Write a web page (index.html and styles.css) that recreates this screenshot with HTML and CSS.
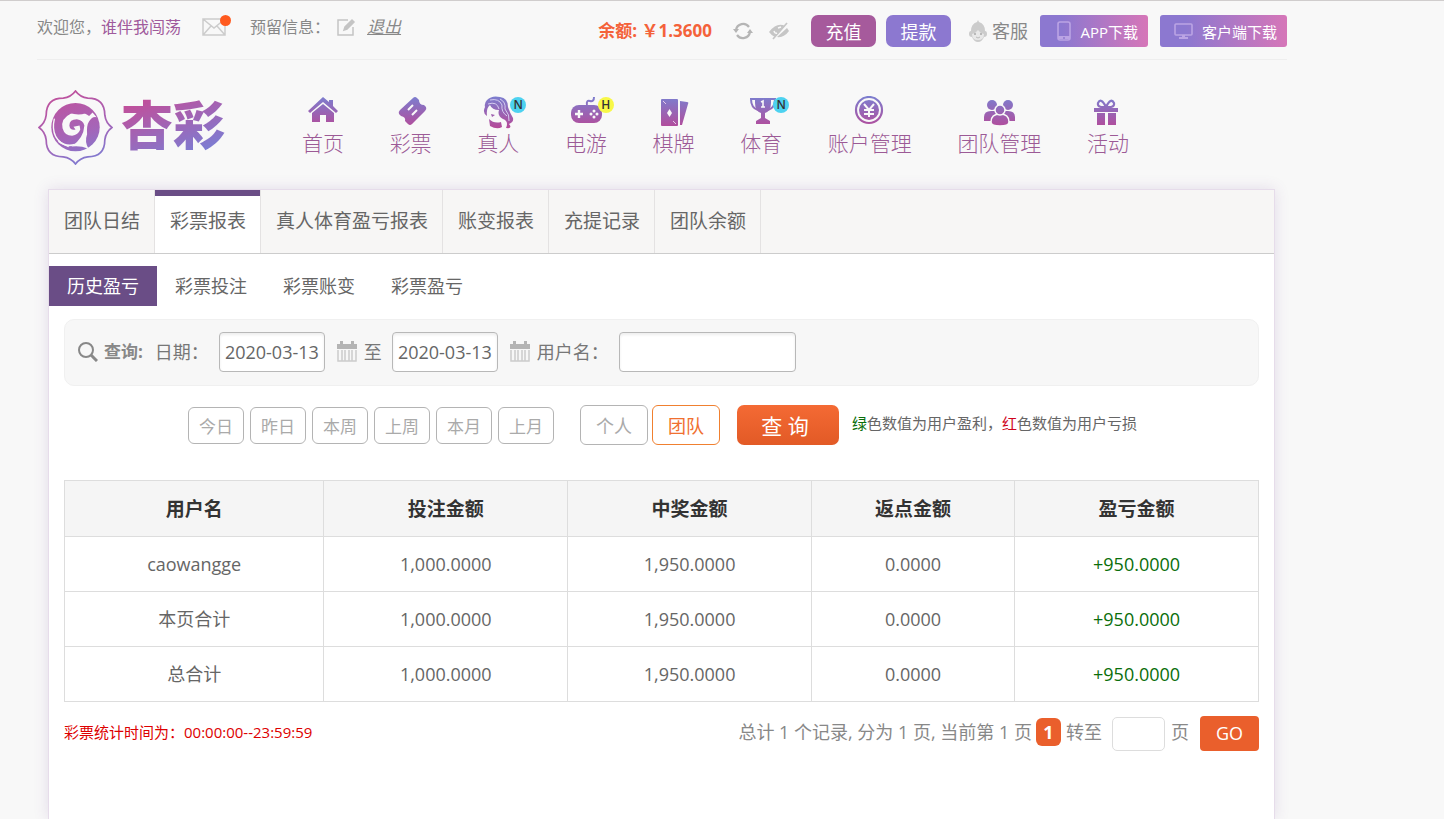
FILE: index.html
```
<!DOCTYPE html>
<html lang="zh-CN">
<head>
    <meta charset="UTF-8">
    <meta name="viewport" content="width=device-width, initial-scale=1.0">
    <title>杏彩 - 彩票报表</title>
    <link rel="stylesheet" href="styles.css">
</head>
<body>
    <svg class="defs" width="0" height="0" aria-hidden="true">
        <defs>
            <linearGradient id="nav-fill" gradientUnits="userSpaceOnUse" x1="0" y1="0" x2="0" y2="32">
                <stop offset="0" stop-color="#7b7fd0"/>
                <stop offset="1" stop-color="#b54a99"/>
            </linearGradient>
            <linearGradient id="logo-fill" gradientUnits="userSpaceOnUse" x1="60" y1="0" x2="140" y2="220">
                <stop offset="0" stop-color="#c14f9a"/>
                <stop offset="0.6" stop-color="#a565b8"/>
                <stop offset="1" stop-color="#7d7cd2"/>
            </linearGradient>
        </defs>
    </svg>

    <header class="header">
        <div class="topbar">
            <div class="welcome">
                <span>欢迎您，<a href="#" class="user">谁伴我闯荡</a></span>
                <a href="#" class="mail" aria-label="消息">
                    <svg width="24" height="20" viewBox="0 0 24 20" fill="none" stroke="#ccc" stroke-width="1.5">
                        <path d="M1 2h22v16H1zM1 2l11 9 11-9M1 18l8-9M23 18l-8-9"/>
                    </svg>
                    <i class="dot"></i>
                </a>
                <span>预留信息：</span>
                <a href="#" class="edit" aria-label="编辑">
                    <svg width="19" height="19" viewBox="0 0 19 19" fill="none" stroke="#c4c4c4" stroke-width="1.5">
                        <path d="M11 2H1v15h15V9"/>
                        <path d="M7 12l1-3 7-7 2 2-7 7z" fill="#c4c4c4"/>
                    </svg>
                </a>
                <a href="#" class="logout">退出</a>
            </div>
            <div class="account">
                <span class="balance">余额: ￥1.3600</span>
                <button type="button" class="icon-btn" aria-label="刷新">
                    <svg width="20" height="20" viewBox="0 0 20 20" fill="none" stroke="#b5b5b5" stroke-width="2.2">
                        <path d="M3 9a7.200 7.200 0 0 1 13-3M17 11a7.200 7.200 0 0 1-13 3"/>
                        <path d="M0 8h6l-3 4zM14 12h6l-3-4z" fill="#b5b5b5" stroke="none"/>
                    </svg>
                </button>
                <button type="button" class="icon-btn eye" aria-label="隐藏余额">
                    <svg width="20" height="20" viewBox="0 0 20 20">
                        <path d="M0 11Q8 1 16 5L6 16Q2 14 0 11zM18 7l2 3Q15 17 8 16z" fill="#c6c6c6"/>
                        <path d="M18 2L4 18" stroke="#c6c6c6" stroke-width="1.6"/>
                        <path d="M5 10q1 3 3 2M9 7l3-1" stroke="#f8f8f8" stroke-width="1.500" fill="none"/>
                    </svg>
                </button>
                <button type="button" class="btn recharge">充值</button>
                <button type="button" class="btn withdraw">提款</button>
                <a href="#" class="service">
                    <svg width="20" height="23" viewBox="0 0 20 23">
                        <path d="M10 0l1 2q6 2 6 9 2 0 2 3t-3 3q-2 5-6 5t-6-5q-3 0-3-3t2-3q0-7 6-9z" fill="#ccc"/>
                        <path d="M4 14q4-1 6-4 2 3 6 4 0 6-6 6t-6-6z" fill="#e8e8e8"/>
                        <circle cx="7" cy="14" r="1" fill="#aaa"/><circle cx="13" cy="14" r="1" fill="#aaa"/>
                        <path d="M8 17q2 2 4 0" fill="none" stroke="#bbb"/>
                    </svg>
                    客服
                </a>
                <button type="button" class="download app">
                    <svg width="14" height="20" viewBox="0 0 14 20">
                        <rect x="1" y="1" width="12" height="18" rx="2" fill="none" stroke="#bba4e4" stroke-width="1.6"/>
                        <path d="M1 15h12v3H1z" fill="#bba4e4"/><circle cx="7" cy="17" r="1" fill="#8f78cf"/>
                    </svg>
                    APP下载
                </button>
                <button type="button" class="download client">
                    <svg width="19" height="16" viewBox="0 0 19 16">
                        <rect x="1" y="1" width="17" height="11" rx="1" fill="none" stroke="#bba4e4" stroke-width="1.600"/>
                        <path d="M8 12h3v2h3v2H5v-2h3z" fill="#bba4e4"/>
                    </svg>
                    客户端下载
                </button>
            </div>
        </div>

        <div class="main-nav">
            <a href="#" class="logo">
                <svg width="75" height="75" viewBox="0 0 220 220">
                    <path d="M110 3C118 14 130 22 146 24C180 24 196 40 196 74C198 90 206 102 217 110C206 118 198 130 196 146C196 180 180 196 146 196C130 198 118 206 110 217C102 206 90 198 74 196C40 196 24 180 24 146C22 130 14 118 3 110C14 102 22 90 24 74C24 40 40 24 74 24C90 22 102 14 110 3Z" fill="none" stroke="url(#logo-fill)" stroke-width="5"/>
                    <circle cx="110" cy="109" r="71" fill="url(#logo-fill)"/>
                    <path d="M150 76Q128 60 96 70Q66 84 72 112Q78 134 100 134Q118 132 124 116L122 104L104 108L110 116Q94 120 92 104Q92 86 114 86Q132 88 136 104Q134 142 98 166Q122 162 148 172Q136 152 144 130Q142 104 150 92Q160 76 172 80L160 66z" fill="#f8f8f8"/>
                    <path d="M92 66Q106 56 124 60L140 68Q116 76 92 66z" fill="url(#logo-fill)"/>
                    <path d="M48 84Q34 146 90 166M170 58q14 16 14 34" fill="none" stroke="#f8f8f8" stroke-width="4"/>
                    <path d="M60 150Q82 168 108 160" fill="none" stroke="#f8f8f8" stroke-width="5"/>
                </svg>
                <span class="logo-text">杏彩</span>
            </a>
            <nav class="menu">
                <a href="#">
                    <svg width="36" height="33" viewBox="0 0 36 33" fill="url(#nav-fill)">
                        <path d="M18 1l6 5V4h4v6l5 5-2 2L18 6 5 17l-2-2z"/>
                        <path d="M18 8l11 9v9h-8v-7h-6v7H7v-9z"/>
                    </svg>
                    首页
                </a>
                <a href="#">
                    <svg width="36" height="33" viewBox="0 0 36 33" fill="url(#nav-fill)">
                        <path d="M20 2q2-2 4 0l2 2q0 5 5 5l2 2q1 2-1 4L19 28q-2 2-4 0l-3-3q1-4-4-5l-2-2q-1-2 1-4z"/>
                        <path d="M15 14l5-5M19 19l5-5" stroke="#f8f8f8" stroke-width="2"/>
                    </svg>
                    彩票
                </a>
                <a href="#">
                    <svg width="36" height="33" viewBox="0 0 36 33" fill="url(#nav-fill)">
                        <path d="M7 4Q12-1 20 1Q28 2 28 11Q30 17 33 22Q34 26 29 28Q33 33 26 32Q29 25 23 23Q17 20 19 14Q12 14 10 9Q6 12 7 20Q2 17 5 11Q4 7 7 4z"/>
                        <path d="M9 23q5 5 12 3l1 5q-5 3-12-1zM11 18l4 1-3 2z"/>
                        <path d="M10 4q9-2 12 5-1 7 5 11M8 8q9-3 11 5M20 3q6 3 5 10 5 6 4 12" fill="none" stroke="#d5cdf0" stroke-width="1"/>
                    </svg>
                    真人
                    <i class="tag new">N</i>
                </a>
                <a href="#">
                    <svg width="36" height="33" viewBox="0 0 36 33" fill="url(#nav-fill)">
                        <rect x="3" y="9" width="31" height="18" rx="8"/>
                        <path d="M19 9q-1-5 3-4 4 1 4-4" fill="none" stroke="url(#nav-fill)" stroke-width="2"/>
                        <path d="M11 14v8M7 18h8" stroke="#f8f8f8" stroke-width="2.400"/>
                        <g fill="#f8f8f8"><circle cx="26" cy="15" r="1.500"/><circle cx="26" cy="21" r="1.500"/><circle cx="23" cy="18" r="1.500"/><circle cx="29" cy="18" r="1.500"/></g>
                    </svg>
                    电游
                    <i class="tag hot">H</i>
                </a>
                <a href="#">
                    <svg width="36" height="33" viewBox="0 0 36 33" fill="url(#nav-fill)">
                        <rect x="5" y="3" width="17" height="27" rx="1"/>
                        <path d="M24 5l7 1q2 0 1 2l-6 21h-2z"/>
                        <path d="M13.500 13l2.500 4-2.500 4-2.500-4z" fill="#f8f8f8"/>
                        <path d="M7 5l3 3M17 25l3 3" stroke="#e6c8e8" stroke-width="1"/>
                    </svg>
                    棋牌
                </a>
                <a href="#">
                    <svg width="36" height="33" viewBox="0 0 36 33" fill="url(#nav-fill)">
                        <path d="M12 2h16v5q0 8-6 10v5l5 3v3H13v-3l5-3v-5q-6-2-6-10z"/>
                        <path d="M12 3H8q0 9 7 11M28 3h4q0 9-7 11" fill="none" stroke="url(#nav-fill)" stroke-width="2"/>
                        <path d="M18 6l2-1v6M18 11h4" fill="none" stroke="#f8f8f8" stroke-width="1.600"/>
                    </svg>
                    体育
                    <i class="tag new">N</i>
                </a>
                <a href="#">
                    <svg width="36" height="33" viewBox="0 0 36 33" fill="url(#nav-fill)">
                        <circle cx="17" cy="14" r="13" fill="none" stroke="url(#nav-fill)" stroke-width="2.200"/>
                        <circle cx="17" cy="14" r="10"/>
                        <path d="M12 8l5 6 5-6M17 14v7M12 14h10M12 18h10" fill="none" stroke="#f8f8f8" stroke-width="2"/>
                    </svg>
                    账户管理
                </a>
                <a href="#">
                    <svg width="36" height="33" viewBox="0 0 36 33" fill="url(#nav-fill)">
                        <circle cx="11" cy="9" r="5"/><circle cx="27" cy="9" r="5"/>
                        <path d="M3 25v-4q0-6 7-6h17q7 0 7 6v4z"/>
                        <g stroke="#f8f8f8" stroke-width="1.500"><path d="M10 26q0-8 9-8t9 8q0 4-9 4t-9-4z"/><circle cx="19" cy="14" r="5"/></g>
                    </svg>
                    团队管理
                </a>
                <a href="#">
                    <svg width="36" height="33" viewBox="0 0 36 33" fill="url(#nav-fill)">
                        <path d="M4 12h24v4H4zM7 17h8v12H7zM18 17h8v12h-8z"/>
                        <path d="M16 11Q7 12 8 7q3-6 8 4 5-10 8-4 1 5-8 4z" fill="none" stroke="url(#nav-fill)" stroke-width="2.200"/>
                    </svg>
                    活动
                </a>
            </nav>
        </div>
    </header>

    <main class="panel">
        <nav class="tabs">
            <a href="#">团队日结</a>
            <a href="#" class="active">彩票报表</a>
            <a href="#">真人体育盈亏报表</a>
            <a href="#">账变报表</a>
            <a href="#">充提记录</a>
            <a href="#">团队余额</a>
        </nav>
        <nav class="subtabs">
            <a href="#" class="active">历史盈亏</a>
            <a href="#">彩票投注</a>
            <a href="#">彩票账变</a>
            <a href="#">彩票盈亏</a>
        </nav>

        <form class="content">
            <div class="search">
                <svg class="magnifier" width="21" height="21" viewBox="0 0 21 21" fill="none" stroke="#888">
                    <circle cx="9" cy="9" r="7" stroke-width="2"/><path d="M14 14l6 6" stroke-width="3"/>
                </svg>
                <span class="search-title">查询:</span>
                <label for="date-from">日期：</label>
                <input type="text" id="date-from" class="date" value="2020-03-13">
                <svg class="calendar" width="20" height="21" viewBox="0 0 20 21">
                    <path d="M0 3h20v5H0zM3 0h3v5H3zM14 0h3v5h-3z" fill="#b4b4b4"/>
                    <path d="M1 9v11h18V9M5 9v11M8 9v11M12 9v11M15 9v11" fill="none" stroke="#ccc" stroke-width="1.500"/>
                </svg>
                <label for="date-to">至</label>
                <input type="text" id="date-to" class="date" value="2020-03-13">
                <svg class="calendar" width="20" height="21" viewBox="0 0 20 21">
                    <path d="M0 3h20v5H0zM3 0h3v5H3zM14 0h3v5h-3z" fill="#b4b4b4"/>
                    <path d="M1 9v11h18V9M5 9v11M8 9v11M12 9v11M15 9v11" fill="none" stroke="#ccc" stroke-width="1.500"/>
                </svg>
                <label for="username">用户名：</label>
                <input type="text" id="username" class="username">
            </div>

            <div class="filters">
                <div class="range">
                    <button type="button">今日</button>
                    <button type="button">昨日</button>
                    <button type="button">本周</button>
                    <button type="button">上周</button>
                    <button type="button">本月</button>
                    <button type="button">上月</button>
                </div>
                <div class="scope">
                    <button type="button">个人</button>
                    <button type="button" class="active">团队</button>
                </div>
                <button type="submit" class="submit">查 询</button>
                <p class="hint"><span class="green">绿</span>色数值为用户盈利，<span class="red">红</span>色数值为用户亏损</p>
            </div>

            <table class="report">
                <thead>
                    <tr>
                        <th class="col-user">用户名</th>
                        <th class="col-bet">投注金额</th>
                        <th class="col-win">中奖金额</th>
                        <th class="col-rebate">返点金额</th>
                        <th class="col-profit">盈亏金额</th>
                    </tr>
                </thead>
                <tbody>
                    <tr>
                        <td>caowangge</td>
                        <td>1,000.0000</td>
                        <td>1,950.0000</td>
                        <td>0.0000</td>
                        <td class="green">+950.0000</td>
                    </tr>
                    <tr>
                        <td>本页合计</td>
                        <td>1,000.0000</td>
                        <td>1,950.0000</td>
                        <td>0.0000</td>
                        <td class="green">+950.0000</td>
                    </tr>
                    <tr>
                        <td>总合计</td>
                        <td>1,000.0000</td>
                        <td>1,950.0000</td>
                        <td>0.0000</td>
                        <td class="green">+950.0000</td>
                    </tr>
                </tbody>
            </table>

            <div class="table-footer">
                <p class="stat-time">彩票统计时间为：00:00:00--23:59:59</p>
                <div class="pager">
                    <span>总计 1 个记录, 分为 1 页, 当前第 1 页</span>
                    <a href="#" class="current">1</a>
                    <label for="page">转至</label>
                    <input type="text" id="page">
                    <span>页</span>
                    <button type="button">GO</button>
                </div>
            </div>
        </form>
    </main>
</body>
</html>
```
FILE: styles.css
```
* {
    box-sizing: border-box;
}

body {
    margin: 0;
    min-height: 100vh;
    display: flex;
    flex-direction: column;
    border-top: 1px solid #d0cdcd;
    background-color: #f8f8f8;
    color: #666;
    font-family: "Open Sans", "Noto Sans CJK SC", sans-serif;
    font-size: 18px;
    line-height: 24px;
}

a {
    color: inherit;
    text-decoration: none;
}

p {
    margin: 0;
}

button, input {
    font-family: inherit;
    padding: 0;
}

button {
    cursor: pointer;
}

svg {
    display: block;
    flex-shrink: 0;
}

.defs {
    position: absolute;
}

.green {
    color: #0a6e0a;
}

.red {
    color: #d0021b;
}

/* top bar */
.header {
    max-width: 1287px;
    padding-left: 37px;
}

.topbar {
    display: flex;
    justify-content: space-between;
    height: 59px;
    padding-top: 14px;
    border-bottom: 1px solid #eee;
    white-space: nowrap;
}

.welcome {
    display: flex;
    align-items: center;
    height: 24px;
    color: #888;
    font-size: 16px;
}

.user {
    color: #a05a9c;
}

.mail {
    position: relative;
    margin: 0 24px 0 21px;
}

.dot {
    position: absolute;
    top: -2px;
    right: -5px;
    width: 11px;
    height: 11px;
    border-radius: 50%;
    background-color: #ff5a1f;
}

.edit {
    margin: 0 11px 0 7px;
}

.logout {
    font-size: 17px;
    font-style: italic;
    text-decoration: underline;
}

.account {
    display: flex;
    align-items: center;
    height: 32px;
}

.balance {
    margin-right: 21px;
    color: #f4623a;
    font-size: 17px;
    font-weight: bold;
}

.icon-btn {
    border: none;
    background: none;
}

.eye {
    margin: 0 22px 0 16px;
}

.btn {
    width: 65px;
    height: 32px;
    margin-right: 10px;
    border: none;
    border-radius: 7px;
    color: #fff;
    font-size: 18px;
}

.recharge {
    background-color: #a65a9c;
}

.withdraw {
    background-color: #8c78d0;
}

.service {
    display: flex;
    align-items: center;
    gap: 4px;
    margin: 0 12px 0 7px;
    color: #888;
}

.download {
    display: flex;
    align-items: center;
    justify-content: flex-end;
    gap: 9px;
    height: 32px;
    padding-right: 10px;
    border: none;
    border-radius: 3px;
    background: linear-gradient(90deg, #8c78d0 20%, #d676b8);
    color: #fff;
    font-size: 15px;
}

.app {
    width: 108px;
    margin-right: 12px;
}

.client {
    width: 127px;
}

/* logo and main menu */
.main-nav {
    display: flex;
    height: 129px;
    padding: 30px 0 0 1px;
}

.logo {
    display: flex;
    gap: 8px;
    width: 264px;
    height: 75px;
}

.logo-text {
    background: linear-gradient(160deg, #c14f9a 15%, #7d7cd2 80%);
    background-clip: text;
    -webkit-background-clip: text;
    color: transparent;
    font-size: 52px;
    font-weight: 900;
    line-height: 70px;
}

.menu {
    display: flex;
    justify-content: space-between;
    flex: 1;
    max-width: 827px;
    padding-top: 6px;
}

.menu a {
    position: relative;
    display: flex;
    flex-direction: column;
    align-items: center;
    height: 61px;
    color: #9c5a96;
    font-size: 21px;
    font-weight: 300;
    line-height: 28px;
    white-space: nowrap;
}

.tag {
    position: absolute;
    top: 1px;
    right: -7px;
    width: 16px;
    height: 16px;
    border-radius: 50%;
    color: #333;
    font-size: 12px;
    font-style: normal;
    font-weight: 600;
    line-height: 16px;
    text-align: center;
}

.new {
    background-color: #4dd2f0;
}

.hot {
    background-color: #f8f848;
}

/* report panel */
.panel {
    flex: 1;
    width: calc(100% - 48px);
    max-width: 1227px;
    margin-left: 48px;
    border: 1px solid #e6dcea;
    border-bottom: none;
    background-color: #fff;
    box-shadow: 0 0 14px rgba(110, 60, 150, 0.15);
}

.tabs {
    display: flex;
    height: 64px;
    border-bottom: 1px solid #ccc;
    background-color: #f7f6f5;
}

.tabs a {
    padding: 0 14px 0 15px;
    border-right: 1px solid #e4e2e2;
    font-size: 19px;
    line-height: 63px;
}

.tabs .active {
    background-color: #fff;
    box-shadow: inset 0 6px #6a4d86;
}

.subtabs {
    display: flex;
    margin: 12px 0 13px;
}

.subtabs a {
    padding: 0 18px;
    line-height: 40px;
}

.subtabs .active {
    background-color: #6a4d86;
    color: #fff;
}

.content {
    padding: 0 15px;
}

.search {
    display: flex;
    align-items: center;
    height: 67px;
    padding: 0 12px 2px;
    border: 1px solid #f0f0f0;
    border-radius: 10px;
    background-color: #f7f7f7;
    color: #777;
}

.search-title {
    margin: 0 12px 0 6px;
    color: #888;
    font-size: 17px;
    font-weight: bold;
}

.search input {
    height: 40px;
    margin-left: 10px;
    border: 1px solid #b8b8b8;
    border-radius: 4px;
    background-color: #fff;
    box-shadow: inset 0 2px 3px #eee;
    color: #666;
    font-size: 18px;
}

.search .date {
    width: 106px;
    text-align: center;
}

.search .username {
    width: 177px;
    padding: 0 8px;
}

.calendar {
    margin: 0 7px 0 12px;
}

.filters {
    display: flex;
    align-items: center;
    margin: 19px 0 35px;
    padding-left: 124px;
}

.range {
    display: flex;
    gap: 6px;
    margin-right: 26px;
}

.scope {
    display: flex;
    gap: 4px;
    margin-right: 17px;
}

.range button, .scope button {
    border: 1px solid #b4b4b4;
    border-radius: 6px;
    background-color: #fff;
    color: #aaa;
}

.range button {
    width: 56px;
    height: 37px;
    font-size: 17px;
}

.scope button {
    width: 68px;
    height: 40px;
    font-size: 18px;
}

.scope .active {
    border-color: #f08030;
    color: #f07030;
}

.submit {
    width: 102px;
    height: 40px;
    margin-right: 13px;
    padding-right: 6px;
    border: none;
    border-radius: 7px;
    background: linear-gradient(#f46a34, #e25a26);
    color: #fff;
    font-size: 21px;
}

.hint {
    padding-bottom: 4px;
    font-size: 15px;
}

/* data table */
.report {
    width: 100%;
    border-collapse: collapse;
    table-layout: fixed;
    text-align: center;
}

.report th, .report td {
    height: 55px;
    padding: 0;
    border: 1px solid #ddd;
}

.report th {
    height: 56px;
    background-color: #f5f5f5;
    color: #333;
    font-size: 19px;
}

.col-user {
    width: 21.7%;
}

.col-bet, .col-win, .col-profit {
    width: 20.4%;
}

.col-rebate {
    width: 17%;
}

.table-footer {
    display: flex;
    align-items: center;
    justify-content: space-between;
    margin-top: 14px;
}

.stat-time {
    padding-bottom: 4px;
    color: #d00;
    font-size: 15px;
}

.pager {
    display: flex;
    align-items: center;
    color: #888;
}

.pager span, .pager label, .pager .current {
    margin-bottom: 3px;
}

.pager .current {
    width: 25px;
    margin-left: 4px;
    margin-right: 5px;
    border-radius: 6px;
    background-color: #ea5f2c;
    color: #fff;
    font-weight: bold;
    line-height: 28px;
    text-align: center;
}

.pager input {
    width: 53px;
    height: 34px;
    margin: 0 6px 0 10px;
    border: 1px solid #ddd;
    border-radius: 5px;
    font-size: 18px;
    text-align: center;
}

.pager button {
    width: 59px;
    height: 35px;
    margin-left: 11px;
    padding-bottom: 2px;
    border: none;
    border-radius: 4px;
    background-color: #ea5f2c;
    color: #fff;
    font-size: 18px;
}
```
